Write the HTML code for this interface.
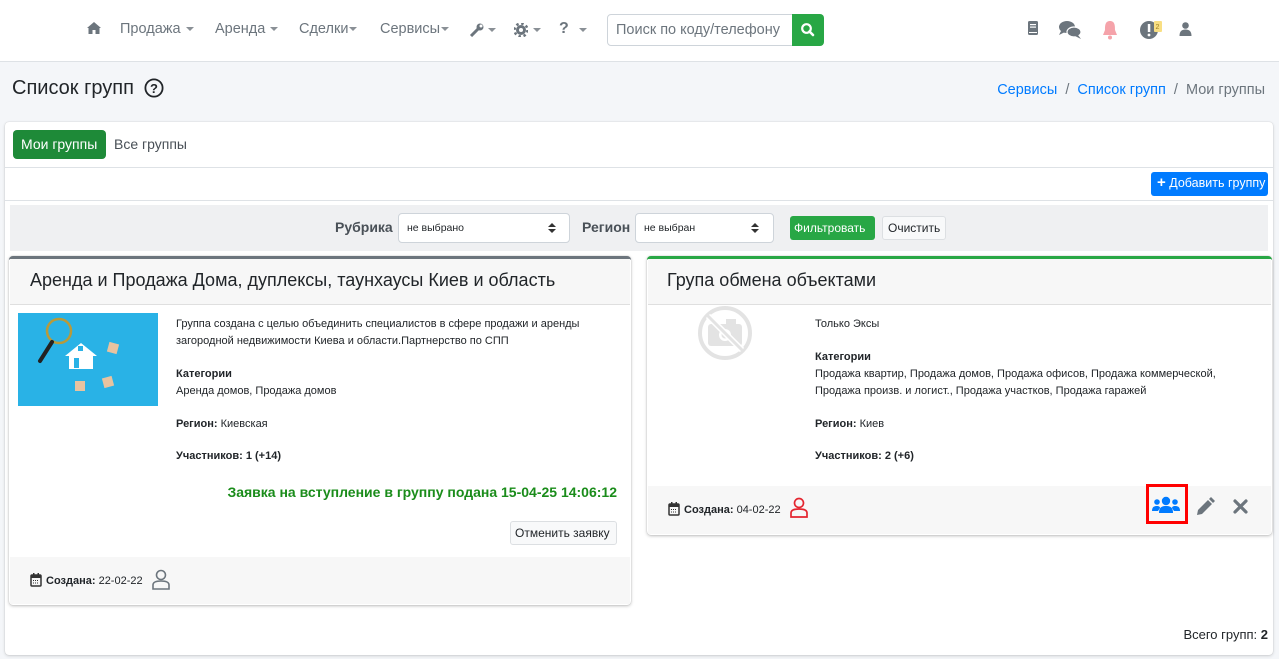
<!DOCTYPE html>
<html><head><meta charset="utf-8"><style>
*{box-sizing:border-box;margin:0;padding:0}
body{width:1279px;height:659px;overflow:hidden;background:#f4f6f9;font-family:"Liberation Sans",sans-serif;color:#212529;position:relative}
.a{position:absolute;white-space:nowrap}
.nav{position:absolute;left:0;top:0;width:1279px;height:62px;background:#fff;border-bottom:1px solid #dee2e6}
.nv{color:#6c757d;font-size:14.5px;top:21px}
.car{display:inline-block;border-left:4px solid transparent;border-right:4px solid transparent;border-top:4px solid #8a9096;vertical-align:middle;margin-left:5px}
.t11{font-size:11px;line-height:17px}
.b{font-weight:bold}
</style></head><body>
<div class="nav"></div>
<svg class="a" style="left:86px;top:21px" width="16" height="14" viewBox="0 0 16 14"><path d="M8 1 L1 7 L2.5 7 L2.5 13 L6.5 13 L6.5 9 L9.5 9 L9.5 13 L13.5 13 L13.5 7 L15 7Z" fill="#6c757d"/></svg>
<div class="a nv" style="left:120px">Продажа<span class="car"></span></div>
<div class="a nv" style="left:215px">Аренда<span class="car"></span></div>
<div class="a nv" style="left:299px">Сделки<span class="car" style="margin-left:1px"></span></div>
<div class="a nv" style="left:380px">Сервисы<span class="car" style="margin-left:1px"></span></div>
<svg class="a" style="left:469px;top:23px" width="16" height="14"><path d="M2 13 L9 6" stroke="#6c757d" stroke-width="3"/><circle cx="11" cy="4" r="3.5" fill="#6c757d"/><circle cx="12" cy="3" r="1.5" fill="#fff"/></svg>
<span class="a car" style="left:483px;top:28px"></span>
<svg class="a" style="left:514px;top:23px" width="14" height="14"><circle cx="7" cy="7" r="5" fill="#6c757d"/><circle cx="7" cy="7" r="6.5" fill="none" stroke="#6c757d" stroke-width="2.5" stroke-dasharray="2.5 2.6"/><circle cx="7" cy="7" r="2" fill="#fff"/></svg>
<span class="a car" style="left:528px;top:28px"></span>
<div class="a nv b" style="left:559px;top:20px;font-size:16px">?</div>
<span class="a car" style="left:574px;top:28px"></span>
<div class="a" style="left:607px;top:14px;width:187px;height:32px;border:1px solid #ced4da;border-radius:4px 0 0 4px;color:#6c757d;font-size:14.5px;padding:7px 8px">Поиск по коду/телефону</div>
<div class="a" style="left:792px;top:14px;width:32px;height:32px;background:#28a745;border-radius:0 4px 4px 0"></div>
<svg class="a" style="left:800px;top:22px" width="16" height="16"><circle cx="6.5" cy="6.5" r="4.3" fill="none" stroke="#fff" stroke-width="2.2"/><path d="M9.5 9.5 L13 13" stroke="#fff" stroke-width="2.6" stroke-linecap="round"/></svg>
<svg class="a" style="left:1027px;top:21px" width="12" height="15"><rect x="1" y="0" width="10" height="14" rx="1.5" fill="#6c757d"/><rect x="3" y="3" width="6" height="1.2" fill="#fff"/><rect x="3" y="5.5" width="6" height="1.2" fill="#fff"/><rect x="2" y="11" width="8" height="1" fill="#fff"/></svg>
<svg class="a" style="left:1058px;top:20px" width="26" height="20"><ellipse cx="9" cy="7" rx="8" ry="6" fill="#6c757d"/><path d="M3 11 L1 15 L7 12Z" fill="#6c757d"/><ellipse cx="16" cy="12" rx="7" ry="5" fill="#6c757d" stroke="#fff" stroke-width="1.2"/><path d="M20 15 L23 19 L17 16Z" fill="#6c757d"/></svg>
<svg class="a" style="left:1101px;top:19px" width="18" height="22"><path d="M9 2 C4 2 4 7 4 11 L2 16 L16 16 L14 11 C14 7 14 2 9 2Z" fill="#f5a3aa"/><circle cx="9" cy="18.5" r="2" fill="#f5a3aa"/></svg>
<svg class="a" style="left:1139px;top:19px" width="24" height="22"><circle cx="10" cy="11" r="9" fill="#6c757d"/><rect x="8.8" y="5" width="2.5" height="8" fill="#fff"/><circle cx="10" cy="16" r="1.4" fill="#fff"/><rect x="15" y="2" width="8" height="11" rx="1" fill="#f9df83"/><text x="16.5" y="10" font-size="7" fill="#a08020" font-family="Liberation Sans">2</text></svg>
<svg class="a" style="left:1179px;top:22px" width="13" height="14"><circle cx="6.5" cy="3.5" r="3.3" fill="#6c757d"/><path d="M0.5 14 C0.5 9 3 7.5 6.5 7.5 C10 7.5 12.5 9 12.5 14Z" fill="#6c757d"/></svg>

<div class="a" style="left:12px;top:77px;font-size:20px;color:#212529">Список групп</div>
<svg class="a" style="left:144px;top:78px" width="20" height="20"><circle cx="10" cy="10" r="8.6" fill="none" stroke="#212529" stroke-width="1.8"/><text x="10" y="15" text-anchor="middle" font-size="13" font-weight="bold" fill="#212529" font-family="Liberation Sans">?</text></svg>
<div class="a" style="right:14px;top:82px;font-size:14.5px;color:#6c757d"><span style="color:#007bff">Сервисы</span>&nbsp; / &nbsp;<span style="color:#007bff">Список групп</span>&nbsp; / &nbsp;Мои группы</div>

<div class="a" style="left:5px;top:122px;width:1268px;height:533px;background:#fff;border-radius:4px;box-shadow:0 0 1px rgba(0,0,0,.2),0 1px 3px rgba(0,0,0,.15)"></div>
<div class="a" style="left:13px;top:130px;width:93px;height:29px;background:#1e8a38;border-radius:4px;color:#fff;font-size:14px;padding:6px 0 0 8px">Мои группы</div>
<div class="a" style="left:114px;top:136px;font-size:14px;color:#495057">Все группы</div>
<div class="a" style="left:5px;top:167px;width:1268px;height:1px;background:#dee2e6"></div>
<div class="a" style="left:1151px;top:172px;width:117px;height:24px;background:#007bff;border-radius:3px;color:#fff;font-size:12.5px;padding:4px 0 0 6px"><b style="font-size:15px;line-height:10px">+</b> Добавить группу</div>
<div class="a" style="left:5px;top:200px;width:1268px;height:1px;background:#dee2e6"></div>
<div class="a" style="left:10px;top:205px;width:1258px;height:46px;background:#eff0f2"></div>
<div class="a b" style="left:335px;top:219px;font-size:14px;color:#495057">Рубрика</div>
<div class="a" style="left:398px;top:213px;width:172px;height:30px;background:#fff;border:1px solid #ced4da;border-radius:4px;font-size:10.5px;padding:8px 8px">не выбрано</div>
<svg class="a" style="left:548px;top:222px" width="8" height="12"><path d="M0 5 L4 1 L8 5Z M0 7 L4 11 L8 7Z" fill="#333"/></svg>
<div class="a b" style="left:582px;top:219px;font-size:14px;color:#495057">Регион</div>
<div class="a" style="left:635px;top:213px;width:139px;height:30px;background:#fff;border:1px solid #ced4da;border-radius:4px;font-size:10.5px;padding:8px 8px">не выбран</div>
<svg class="a" style="left:751px;top:222px" width="8" height="12"><path d="M0 5 L4 1 L8 5Z M0 7 L4 11 L8 7Z" fill="#333"/></svg>
<div class="a" style="left:790px;top:216px;width:85px;height:24px;background:#28a745;border-radius:3px;color:#fff;font-size:12px;padding:5px 0 0 4px">Фильтровать</div>
<div class="a" style="left:882px;top:216px;width:64px;height:24px;background:#f8f9fa;border:1px solid #dcdfe2;border-radius:3px;color:#212529;font-size:12px;padding:4px 0 0 5px">Очистить</div>

<!-- card 1 -->
<div class="a" style="left:9px;top:256px;width:622px;height:349px;background:#fff;border-top:3px solid #6c757d;border-radius:4px;box-shadow:0 0 1px rgba(0,0,0,.2),0 1px 3px rgba(0,0,0,.25)"></div>
<div class="a" style="left:10px;top:259px;width:620px;height:46px;background:#f7f7f7;border-bottom:1px solid #dfdfdf"></div>
<div class="a" style="left:30px;top:270px;font-size:18px">Аренда и Продажа Дома, дуплексы, таунхаусы Киев и область</div>
<svg class="a" style="left:18px;top:313px" width="140" height="93"><rect width="140" height="93" fill="#29b2e6"/><circle cx="41" cy="18" r="12" fill="none" stroke="#b89a3a" stroke-width="2.5"/><path d="M34 29 L22 48" stroke="#222" stroke-width="4" stroke-linecap="round"/><path d="M63 30 L47 43 L51 43 L51 56 L75 56 L75 43 L79 43Z" fill="#fff"/><rect x="56" y="45" width="5" height="10" fill="#29b2e6"/><rect x="60" y="33" width="5" height="5" fill="#29b2e6"/><rect x="90" y="30" width="10" height="10" fill="#e8c3a0" transform="rotate(15 95 35)"/><rect x="57" y="68" width="10" height="10" fill="#e8c3a0"/><rect x="85" y="64" width="10" height="10" fill="#e8c3a0" transform="rotate(-15 90 69)"/></svg>
<div class="a t11" style="left:176px;top:316px">Группа создана с целью объединить специалистов в сфере продажи и аренды<br>загородной недвижимости Киева и области.Партнерство по СПП</div>
<div class="a t11" style="left:176px;top:366px"><b>Категории</b><br>Аренда домов, Продажа домов</div>
<div class="a t11" style="left:176px;top:416px"><b>Регион:</b> Киевская</div>
<div class="a t11 b" style="left:176px;top:448px">Участников: 1 (+14)</div>
<div class="a b" style="right:662px;top:484px;font-size:14px;color:#1a8c1a">Заявка на вступление в группу подана 15-04-25 14:06:12</div>
<div class="a" style="left:510px;top:521px;width:107px;height:24px;background:#f8f9fa;border:1px solid #dcdfe2;border-radius:3px;font-size:12px;padding:4px 0 0 4px">Отменить заявку</div>
<div class="a" style="left:10px;top:557px;width:620px;height:47px;background:#f7f7f7"></div>
<svg class="a" style="left:30px;top:573px" width="12" height="14"><rect x="1" y="2" width="10" height="11" rx="1" fill="none" stroke="#333" stroke-width="1.5"/><rect x="1" y="2" width="10" height="3" fill="#333"/><rect x="3" y="0" width="1.5" height="3" fill="#333"/><rect x="7.5" y="0" width="1.5" height="3" fill="#333"/><path d="M3 7.5h6M3 10h6" stroke="#333" stroke-dasharray="1 1"/></svg>
<div class="a t11" style="left:46px;top:573px"><b>Создана:</b> 22-02-22</div>
<svg class="a" style="left:151px;top:569px" width="20" height="21"><circle cx="10" cy="6" r="4.5" fill="none" stroke="#6c757d" stroke-width="1.6"/><path d="M2 20 L2 16 C2 13 5 12 10 12 C15 12 18 13 18 16 L18 20Z" fill="none" stroke="#6c757d" stroke-width="1.6"/></svg>

<!-- card 2 -->
<div class="a" style="left:647px;top:256px;width:625px;height:279px;background:#fff;border-top:3px solid #28a745;border-radius:4px;box-shadow:0 0 1px rgba(0,0,0,.2),0 1px 3px rgba(0,0,0,.25)"></div>
<div class="a" style="left:648px;top:259px;width:623px;height:46px;background:#f7f7f7;border-bottom:1px solid #dfdfdf"></div>
<div class="a" style="left:667px;top:270px;font-size:18px">Група обмена объектами</div>
<svg class="a" style="left:692px;top:300px" width="66" height="66"><circle cx="33" cy="33" r="25" fill="none" stroke="#e3e3e3" stroke-width="4"/><rect x="16" y="24" width="34" height="22" rx="3" fill="#e3e3e3"/><rect x="34" y="19" width="10" height="6" fill="#e3e3e3"/><circle cx="33" cy="35" r="6" fill="#fff"/><circle cx="33" cy="35" r="3.5" fill="#e3e3e3"/><path d="M16 16 L50 50" stroke="#fff" stroke-width="6"/><path d="M15 15 L51 51" stroke="#e3e3e3" stroke-width="3"/></svg>
<div class="a t11" style="left:815px;top:316px">Только Эксы</div>
<div class="a t11" style="left:815px;top:349px"><b>Категории</b><br>Продажа квартир, Продажа домов, Продажа офисов, Продажа коммерческой,<br>Продажа произв. и логист., Продажа участков, Продажа гаражей</div>
<div class="a t11" style="left:815px;top:416px"><b>Регион:</b> Киев</div>
<div class="a t11 b" style="left:815px;top:448px">Участников: 2 (+6)</div>
<div class="a" style="left:648px;top:486px;width:623px;height:48px;background:#f7f7f7"></div>
<svg class="a" style="left:668px;top:502px" width="12" height="14"><rect x="1" y="2" width="10" height="11" rx="1" fill="none" stroke="#333" stroke-width="1.5"/><rect x="1" y="2" width="10" height="3" fill="#333"/><rect x="3" y="0" width="1.5" height="3" fill="#333"/><rect x="7.5" y="0" width="1.5" height="3" fill="#333"/><path d="M3 7.5h6M3 10h6" stroke="#333" stroke-dasharray="1 1"/></svg>
<div class="a t11" style="left:684px;top:502px"><b>Создана:</b> 04-02-22</div>
<svg class="a" style="left:789px;top:497px" width="20" height="22"><circle cx="10" cy="6" r="4.5" fill="none" stroke="#e4252f" stroke-width="1.7"/><path d="M2 20 L2 16 C2 13 5 12 10 12 C15 12 18 13 18 16 L18 20Z" fill="none" stroke="#e4252f" stroke-width="1.7"/></svg>
<div class="a" style="left:1146px;top:484px;width:42px;height:40px;border:3px solid #f00"></div>
<svg class="a" style="left:1152px;top:496px" width="28" height="18"><circle cx="14" cy="5" r="4.2" fill="#007bff"/><circle cx="5" cy="6" r="2.8" fill="#007bff"/><circle cx="23" cy="6" r="2.8" fill="#007bff"/><path d="M7 17 C7 12 9 10 14 10 C19 10 21 12 21 17Z" fill="#007bff"/><path d="M0 15 C0 11 2 10 5 10 C7 10 8 11 8 12 L6 15Z" fill="#007bff"/><path d="M28 15 C28 11 26 10 23 10 C21 10 20 11 20 12 L22 15Z" fill="#007bff"/></svg>
<svg class="a" style="left:1195px;top:497px" width="20" height="20"><path d="M3 13 L13 3 L17 7 L7 17 L2 18Z" fill="#6c757d"/><path d="M14 2 L16 0 L20 4 L18 6Z" fill="#6c757d"/></svg>
<svg class="a" style="left:1233px;top:499px" width="15" height="15"><path d="M2 2 L13 13 M13 2 L2 13" stroke="#6c757d" stroke-width="3.2" stroke-linecap="round"/></svg>

<div class="a" style="right:11px;top:627px;font-size:13px">Всего групп: <b>2</b></div>
</body></html>
